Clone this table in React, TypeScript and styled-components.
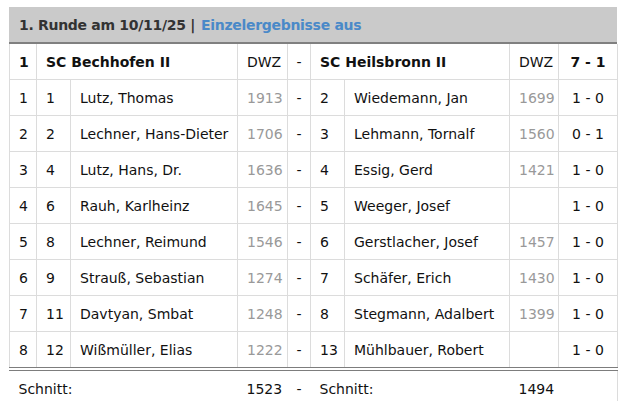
import styled, { createGlobalStyle } from "styled-components";

const GlobalStyle = createGlobalStyle`
  body {
    margin: 0;
    background: #fff;
    font-family: "DejaVu Sans", Verdana, sans-serif;
  }
`;

const Page = styled.div`
  padding: 7px 0 0 9px;
  width: 608px;
`;

const TitleBar = styled.div`
  height: 35px;
  display: flex;
  align-items: center;
  padding-left: 10px;
  background: #cacaca;
  border-bottom: 2px solid #808080;
  font-size: 14px;
  font-weight: bold;
  letter-spacing: -0.3px;
  color: #333;
`;

const TitleLink = styled.a`
  color: #4a89c8;
  text-decoration: none;
  margin-left: 6px;
`;

const Table = styled.table`
  width: 608px;
  table-layout: fixed;
  border-collapse: collapse;
  font-size: 14px;
  color: #111;
`;

const Cell = styled.td<{ $align?: "left" | "center"; $muted?: boolean; $bold?: boolean }>`
  height: 35px;
  padding: 0 0 0 9px;
  border: 1px solid #dcdcdc;
  border-top: none;
  text-align: ${(p) => p.$align || "left"};
  color: ${(p) => (p.$muted ? "#999" : "#111")};
  font-weight: ${(p) => (p.$bold ? "bold" : "normal")};
  white-space: nowrap;
  overflow: hidden;
  ${(p) => (p.$align === "center" ? "padding: 0;" : "")}
`;

const LastRow = styled.tr`
  td {
    border-bottom: 4px double #7d7d7d;
  }
`;

const FooterRow = styled.tr`
  td {
    border-left: none;
    border-right: none;
    border-bottom: none;
  }
  td:last-child {
    border-right: 1px solid #dcdcdc;
  }
`;

type Pairing = {
  board: number;
  homeNo: number;
  home: string;
  homeDwz?: number;
  awayNo: number;
  away: string;
  awayDwz?: number;
  result: string;
};

const pairings: Pairing[] = [
  { board: 1, homeNo: 1, home: "Lutz, Thomas", homeDwz: 1913, awayNo: 2, away: "Wiedemann, Jan", awayDwz: 1699, result: "1 - 0" },
  { board: 2, homeNo: 2, home: "Lechner, Hans-Dieter", homeDwz: 1706, awayNo: 3, away: "Lehmann, Tornalf", awayDwz: 1560, result: "0 - 1" },
  { board: 3, homeNo: 4, home: "Lutz, Hans, Dr.", homeDwz: 1636, awayNo: 4, away: "Essig, Gerd", awayDwz: 1421, result: "1 - 0" },
  { board: 4, homeNo: 6, home: "Rauh, Karlheinz", homeDwz: 1645, awayNo: 5, away: "Weeger, Josef", result: "1 - 0" },
  { board: 5, homeNo: 8, home: "Lechner, Reimund", homeDwz: 1546, awayNo: 6, away: "Gerstlacher, Josef", awayDwz: 1457, result: "1 - 0" },
  { board: 6, homeNo: 9, home: "Strauß, Sebastian", homeDwz: 1274, awayNo: 7, away: "Schäfer, Erich", awayDwz: 1430, result: "1 - 0" },
  { board: 7, homeNo: 11, home: "Davtyan, Smbat", homeDwz: 1248, awayNo: 8, away: "Stegmann, Adalbert", awayDwz: 1399, result: "1 - 0" },
  { board: 8, homeNo: 12, home: "Wißmüller, Elias", homeDwz: 1222, awayNo: 13, away: "Mühlbauer, Robert", result: "1 - 0" },
];

const widths = [27, 34, 167, 50, 23, 34, 165, 49, 59];

const PairingCells = ({ p }: { p: Pairing }) => (
  <>
    <Cell>{p.board}</Cell>
    <Cell>{p.homeNo}</Cell>
    <Cell>{p.home}</Cell>
    <Cell $muted>{p.homeDwz}</Cell>
    <Cell $align="center">-</Cell>
    <Cell>{p.awayNo}</Cell>
    <Cell>{p.away}</Cell>
    <Cell $muted>{p.awayDwz}</Cell>
    <Cell $align="center">{p.result}</Cell>
  </>
);

export default function App() {
  return (
    <Page>
      <GlobalStyle />
      <TitleBar>
        1. Runde am 10/11/25 |<TitleLink href="#">Einzelergebnisse aus</TitleLink>
      </TitleBar>
      <Table>
        <colgroup>
          {widths.map((w, i) => (
            <col key={i} style={{ width: w }} />
          ))}
        </colgroup>
        <tbody>
          <tr>
            <Cell $bold>1</Cell>
            <Cell $bold colSpan={2}>SC Bechhofen II</Cell>
            <Cell>DWZ</Cell>
            <Cell $align="center">-</Cell>
            <Cell $bold colSpan={2}>SC Heilsbronn II</Cell>
            <Cell>DWZ</Cell>
            <Cell $bold $align="center">7 - 1</Cell>
          </tr>
          {pairings.slice(0, -1).map((p) => (
            <tr key={p.board}>
              <PairingCells p={p} />
            </tr>
          ))}
          <LastRow>
            <PairingCells p={pairings[pairings.length - 1]} />
          </LastRow>
          <FooterRow>
            <Cell colSpan={3}>Schnitt:</Cell>
            <Cell>1523</Cell>
            <Cell $align="center">-</Cell>
            <Cell colSpan={2}>Schnitt:</Cell>
            <Cell>1494</Cell>
            <Cell />
          </FooterRow>
        </tbody>
      </Table>
    </Page>
  );
}
